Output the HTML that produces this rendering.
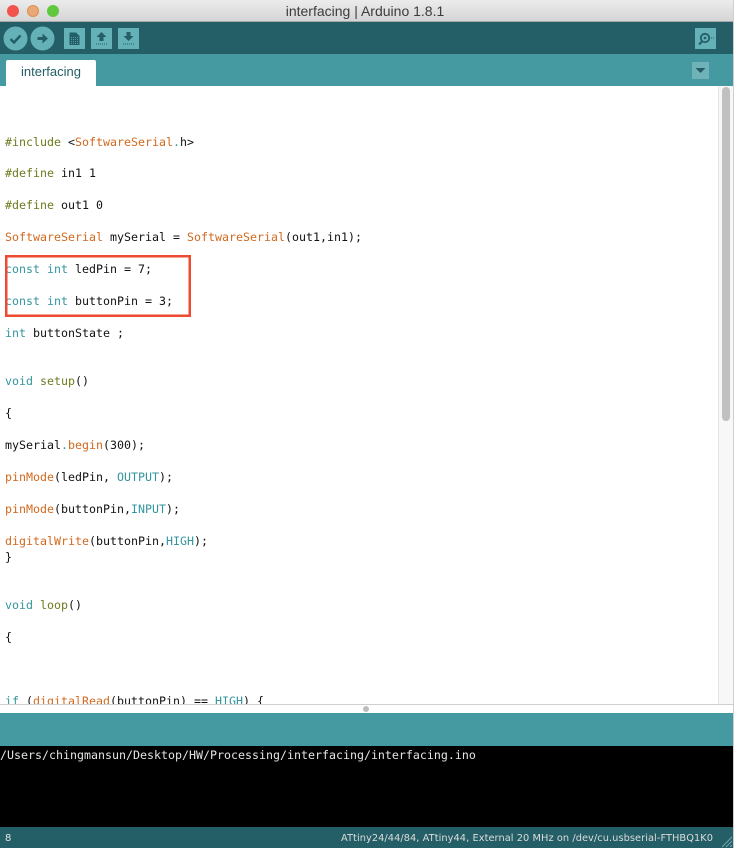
<!DOCTYPE html>
<html><head><meta charset="utf-8">
<style>
html,body{margin:0;padding:0;background:#fff}
#w{position:relative;width:734px;height:848px;overflow:hidden;background:#fff;font-family:"DejaVu Sans Mono",monospace}
#w div{position:absolute}
.l{left:5px;font-size:11.63px;line-height:16px;height:16px;white-space:pre;color:#111}
.k{color:#33969e}.o{color:#d2691e}.g{color:#6f7a1e}
</style></head><body><div id="w">
<div style="left:0;top:0;width:734px;height:22px;background:linear-gradient(#ececec,#d4d4d4)"></div>
<div style="left:0;top:21px;width:734px;height:1px;background:#a8a8a8"></div>
<div style="left:7px;top:5px;width:12px;height:12px;border-radius:50%;background:#f0544c"></div>
<div style="left:27px;top:5px;width:12px;height:12px;border-radius:50%;background:#e8a878;box-sizing:border-box;border:1px solid #dd8f4a"></div>
<div style="left:47px;top:5px;width:12px;height:12px;border-radius:50%;background:#5fc83c"></div>
<div style="left:0;top:3px;width:730px;text-align:center;font:14px/17px 'Liberation Sans',sans-serif;color:#3c3c3c">interfacing | Arduino 1.8.1</div>
<div style="left:0;top:22px;width:734px;height:32px;background:#245e66"></div>
<div style="left:0;top:54px;width:734px;height:32px;background:#459aa2"></div>
<svg style="position:absolute;left:0;top:22px" width="734" height="32">
<circle cx="15.5" cy="16.5" r="12" fill="#64b1b8"/><path d="M10.5 17l3.500 3.500 6.500-7" fill="none" stroke="#245e66" stroke-width="2.400"/>
<circle cx="42.5" cy="16.5" r="12" fill="#64b1b8"/><path d="M37.500 15h5v-3.500l5.500 5-5.500 5V18h-5z" fill="#245e66"/>
<rect x="64" y="6" width="21" height="21" fill="#64b1b8"/><path d="M69.500 10.500h6.500l3.500 3.500v9h-10z" fill="#245e66"/><path d="M71 15.500h7M71 17.500h7M71 19.500h7M71 21.500h7" stroke="#64b1b8" stroke-width=".8" stroke-dasharray="1 1"/>
<rect x="91" y="6" width="21" height="21" fill="#64b1b8"/><path d="M101.500 10l5 5h-3v4h-4v-4h-3z" fill="#245e66"/><path d="M96 22h11" stroke="#245e66" stroke-dasharray="1 1" stroke-width="1"/>
<rect x="118" y="6" width="21" height="21" fill="#64b1b8"/><path d="M128.500 19l-5-5h3v-4h4v4h3z" fill="#245e66"/><path d="M123 22h11" stroke="#245e66" stroke-dasharray="1 1" stroke-width="1"/>
<rect x="695" y="6" width="21" height="21" fill="#64b1b8"/><circle cx="705" cy="16" r="4.200" fill="none" stroke="#245e66" stroke-width="1.800"/><circle cx="705" cy="16" r="1.300" fill="#245e66"/><path d="M702 19.500l-3 3" stroke="#245e66" stroke-width="2"/><path d="M711 16h3" stroke="#245e66" stroke-dasharray="1 1"/>
</svg>
<div style="left:6px;top:60px;width:90px;height:26px;background:#fff;border-radius:2px 2px 0 0;text-align:center;font:13px/24px 'Liberation Sans',sans-serif;color:#245e66">interfacing</div>
<div style="left:692px;top:62px;width:17px;height:17px;background:#6fb2b8"></div>
<svg style="position:absolute;left:692px;top:62px" width="17" height="17"><path d="M3.500 6h10l-5 5z" fill="#245e66"/></svg>
<div class="l" style="top:134px"><span class="g">#include</span> &lt;<span class="o">SoftwareSerial</span><span class="k">.</span>h&gt;</div>
<div class="l" style="top:165px"><span class="g">#define</span> in1 1</div>
<div class="l" style="top:197px"><span class="g">#define</span> out1 0</div>
<div class="l" style="top:229px"><span class="o">SoftwareSerial</span> mySerial = <span class="o">SoftwareSerial</span>(out1,in1);</div>
<div class="l" style="top:261px"><span class="k">const int</span> ledPin = 7;</div>
<div class="l" style="top:293px"><span class="k">const int</span> buttonPin = 3;</div>
<div class="l" style="top:325px"><span class="k">int</span> buttonState ;</div>
<div class="l" style="top:373px"><span class="k">void</span> <span class="g">setup</span>()</div>
<div class="l" style="top:405px">{</div>
<div class="l" style="top:437px">mySerial<span class="k">.</span><span class="o">begin</span>(300);</div>
<div class="l" style="top:469px"><span class="o">pinMode</span>(ledPin, <span class="k">OUTPUT</span>);</div>
<div class="l" style="top:501px"><span class="o">pinMode</span>(buttonPin,<span class="k">INPUT</span>);</div>
<div class="l" style="top:533px"><span class="o">digitalWrite</span>(buttonPin,<span class="k">HIGH</span>);</div>
<div class="l" style="top:549px">}</div>
<div class="l" style="top:597px"><span class="k">void</span> <span class="g">loop</span>()</div>
<div class="l" style="top:629px">{</div>
<div class="l" style="top:693px"><span class="k">if</span> (<span class="o">digitalRead</span>(buttonPin) == <span class="k">HIGH</span>) {</div>
<svg style="position:absolute;left:0;top:250px" width="200" height="72"><rect x="6.250" y="6.250" width="183.500" height="59.500" fill="none" stroke="#ee4a32" stroke-width="2.500"/></svg>
<div style="left:718px;top:86px;width:16px;height:618px;background:#f7f7f7;border-left:1px solid #e6e6e6;box-sizing:border-box"></div>
<div style="left:722px;top:87px;width:8px;height:334px;background:#c0c0c0;border-radius:4px"></div>
<div style="left:0;top:704px;width:734px;height:10px;background:#fff;border-top:1px solid #cfcfcf;box-sizing:border-box"></div>
<div style="left:363px;top:706px;width:6px;height:6px;border-radius:50%;background:#bdbdbd"></div>
<div style="left:0;top:713px;width:734px;height:33px;background:#459aa2"></div>
<div style="left:0;top:746px;width:734px;height:81px;background:#000"></div>
<div class="l" style="left:0;top:747px;color:#e4e4e4">/Users/chingmansun/Desktop/HW/Processing/interfacing/interfacing.ino</div>
<div style="left:0;top:827px;width:734px;height:21px;background:#245e66"></div>
<svg style="position:absolute;left:0;top:827px" width="734" height="21">
<text x="5" y="14" font-family="'DejaVu Sans',sans-serif" font-size="10" fill="#e4e4e4">8</text>
<text x="341" y="14" font-family="'DejaVu Sans',sans-serif" font-size="9.800" fill="#dcdcdc" textLength="372" lengthAdjust="spacing">ATtiny24/44/84, ATtiny44, External 20 MHz on /dev/cu.usbserial-FTHBQ1K0</text>
<path d="M722 20l10-10M726 20l6-6M730 20l2-2" stroke="#6fa8ae" stroke-width="1" fill="none"/>
</svg>
<div style="left:733px;top:0;width:1px;height:848px;background:#d0d0d0"></div>
</div></body></html>
